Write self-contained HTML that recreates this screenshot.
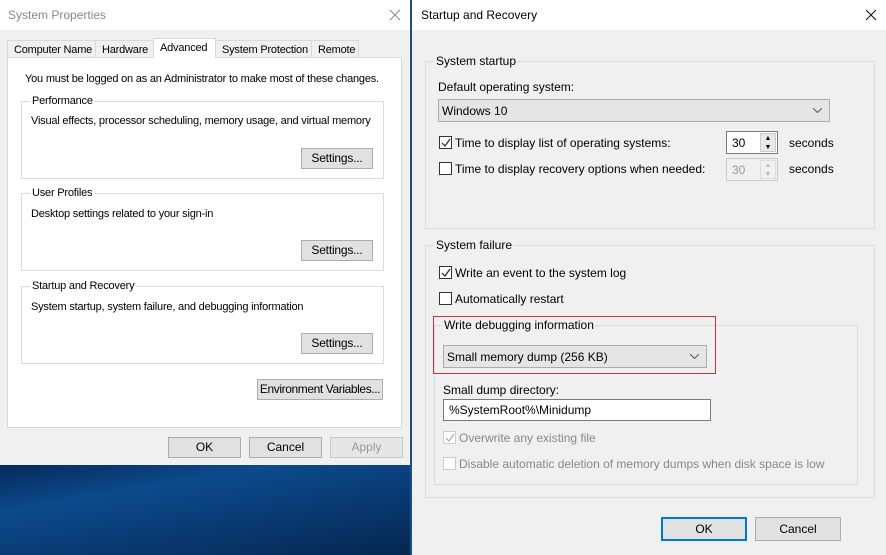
<!DOCTYPE html>
<html><head><meta charset="utf-8"><style>
*{box-sizing:border-box;margin:0;padding:0}
body{width:886px;height:555px;overflow:hidden;position:relative;font-family:"Liberation Sans",sans-serif;color:#000;background:#0a3a70}
.a{position:absolute;white-space:nowrap}
.L{font-size:11px;letter-spacing:-0.2px;line-height:14px}
.R{font-size:12px;line-height:14px}
.btn{position:absolute;background:#e1e1e1;border:1px solid #adadad;text-align:center;font-size:12px;white-space:nowrap}
.grp{position:absolute;border:1px solid #dcdcdc}
.lg{position:absolute;top:-8px;left:8px;padding:0 2px;line-height:14px}
.cb{position:absolute;width:13px;height:13px;border:1px solid #333;background:#fff}
.cb svg{position:absolute;left:0;top:0}
.chev{position:absolute;right:7px;top:8px}
</style></head><body>
<div class="a" style="left:0;top:465px;width:412px;height:90px;background:linear-gradient(170deg,#062a5a 0%,#0c4a8c 30%,#0a3d78 55%,#052650 100%)"></div>
<!-- Left window -->
<div class="a" style="left:0;top:0;width:410px;height:465px;background:#f0f0f0"></div>
<div class="a" style="left:0;top:0;width:410px;height:30px;background:#fff"></div>
<div class="a" style="left:8px;top:8px;font-size:12px;color:#888">System Properties</div>
<svg class="a" style="left:389px;top:9px" width="12" height="12"><path d="M1 1L11 11M11 1L1 11" stroke="#888" stroke-width="1"/></svg>
<div class="a" style="left:7px;top:57px;width:395px;height:371px;background:#fff;border:1px solid #d9d9d9"></div>
<div class="a L" style="left:7px;top:40px;width:89px;height:18px;border:1px solid #d9d9d9;background:#f0f0f0;padding:2px 6px">Computer Name</div>
<div class="a L" style="left:95px;top:40px;width:59px;height:18px;border:1px solid #d9d9d9;background:#f0f0f0;padding:2px 6px">Hardware</div>
<div class="a L" style="left:153px;top:38px;width:63px;height:20px;border:1px solid #d9d9d9;border-bottom:none;background:#fff;padding:2px 6px">Advanced</div>
<div class="a L" style="left:215px;top:40px;width:97px;height:18px;border:1px solid #d9d9d9;background:#f0f0f0;padding:2px 6px">System Protection</div>
<div class="a L" style="left:311px;top:40px;width:48px;height:18px;border:1px solid #d9d9d9;background:#f0f0f0;padding:2px 6px">Remote</div>
<div class="a L" style="left:25px;top:72px">You must be logged on as an Administrator to make most of these changes.</div>
<div class="grp L" style="left:21px;top:101px;width:363px;height:78px"><span class="lg" style="background:#fff">Performance</span></div>
<div class="a L" style="left:31px;top:114px">Visual effects, processor scheduling, memory usage, and virtual memory</div>
<div class="btn L" style="left:301px;top:148px;width:72px;height:21px;line-height:19px">Settings...</div>
<div class="grp L" style="left:21px;top:193px;width:363px;height:78px"><span class="lg" style="background:#fff">User Profiles</span></div>
<div class="a L" style="left:31px;top:207px">Desktop settings related to your sign-in</div>
<div class="btn L" style="left:301px;top:240px;width:72px;height:21px;line-height:19px">Settings...</div>
<div class="grp L" style="left:21px;top:286px;width:363px;height:78px"><span class="lg" style="background:#fff">Startup and Recovery</span></div>
<div class="a L" style="left:31px;top:300px">System startup, system failure, and debugging information</div>
<div class="btn L" style="left:301px;top:333px;width:72px;height:21px;line-height:19px">Settings...</div>
<div class="btn L" style="left:257px;top:379px;width:126px;height:21px;line-height:19px;letter-spacing:-0.4px">Environment Variables...</div>
<div class="btn" style="left:168px;top:437px;width:73px;height:21px;line-height:19px">OK</div>
<div class="btn" style="left:249px;top:437px;width:73px;height:21px;line-height:19px">Cancel</div>
<div class="btn" style="left:330px;top:437px;width:73px;height:21px;line-height:19px;color:#999;border-color:#c8c8c8;background:#e6e6e6">Apply</div>
<div class="a" style="left:410px;top:0;width:2px;height:555px;background:#1a4f86"></div>
<!-- Right window -->
<div class="a R" style="left:412px;top:0;width:474px;height:555px;background:#f0f0f0"></div>
<div class="a" style="left:412px;top:0;width:474px;height:30px;background:#fff"></div>
<div class="a R" style="left:421px;top:8px">Startup and Recovery</div>
<svg class="a" style="left:865px;top:9px" width="12" height="12"><path d="M1 1L11 11M11 1L1 11" stroke="#111" stroke-width="1"/></svg>
<div class="grp R" style="left:425px;top:61px;width:450px;height:168px"><span class="lg" style="background:#f0f0f0">System startup</span></div>
<div class="a R" style="left:438px;top:80px">Default operating system:</div>
<div class="a R" style="left:438px;top:99px;width:392px;height:23px;background:#e5e5e5;border:1px solid #adadad;padding:4px 3px">Windows 10<svg class="chev" width="9" height="5"><path d="M0 0L4.5 4.5L9 0" stroke="#555" fill="none"/></svg></div>
<div class="cb" style="left:439px;top:136px"><svg width="12" height="12"><path d="M2 6 L5 9 L10 2" stroke="#222" stroke-width="1.2" fill="none"/></svg></div>
<div class="a R" style="left:455px;top:136px">Time to display list of operating systems:</div>
<div class="a R" style="left:726px;top:131px;width:52px;height:23px;background:#fff;border:1px solid #7a7a7a;padding:4px 5px">30<span style="position:absolute;right:1px;top:1px;width:16px;height:19px;background:#e9e9e9;border:1px solid #ccc;font-size:7px;line-height:9px;text-align:center">▲<br>▼</span></div>
<div class="a R" style="left:789px;top:136px">seconds</div>
<div class="cb" style="left:439px;top:162px"></div>
<div class="a R" style="left:455px;top:162px">Time to display recovery options when needed:</div>
<div class="a R" style="left:726px;top:158px;width:52px;height:23px;background:#f0f0f0;border:1px solid #ccc;padding:4px 5px;color:#999">30<span style="position:absolute;right:1px;top:1px;width:16px;height:19px;background:#f0f0f0;border:1px solid #ddd;font-size:7px;line-height:9px;text-align:center;color:#bbb">▲<br>▼</span></div>
<div class="a R" style="left:789px;top:162px">seconds</div>
<div class="grp R" style="left:425px;top:245px;width:450px;height:253px"><span class="lg" style="background:#f0f0f0">System failure</span></div>
<div class="cb" style="left:439px;top:266px"><svg width="12" height="12"><path d="M2 6 L5 9 L10 2" stroke="#222" stroke-width="1.2" fill="none"/></svg></div>
<div class="a R" style="left:455px;top:266px">Write an event to the system log</div>
<div class="cb" style="left:439px;top:292px"></div>
<div class="a R" style="left:455px;top:292px">Automatically restart</div>
<div class="grp R" style="left:434px;top:325px;width:424px;height:160px"></div>
<div class="a" style="left:433px;top:316px;width:283px;height:58px;border:1px solid #d0303a"></div>
<div class="a R" style="left:443px;top:318px;background:#f0f0f0;padding:0 1px">Write debugging information</div>
<div class="a R" style="left:443px;top:345px;width:264px;height:23px;background:#e5e5e5;border:1px solid #adadad;padding:4px 3px">Small memory dump (256 KB)<svg class="chev" width="9" height="5"><path d="M0 0L4.5 4.5L9 0" stroke="#555" fill="none"/></svg></div>
<div class="a R" style="left:443px;top:383px">Small dump directory:</div>
<div class="a R" style="left:443px;top:399px;width:268px;height:22px;background:#fff;border:1px solid #7a7a7a;padding:3px 5px">%SystemRoot%\Minidump</div>
<div class="cb" style="left:443px;top:431px;border-color:#ccc"><svg width="12" height="12"><path d="M2 6 L5 9 L10 2" stroke="#aaa" stroke-width="1.2" fill="none"/></svg></div>
<div class="a R" style="left:459px;top:431px;color:#888">Overwrite any existing file</div>
<div class="cb" style="left:443px;top:457px;border-color:#ccc"></div>
<div class="a R" style="left:459px;top:457px;color:#888">Disable automatic deletion of memory dumps when disk space is low</div>
<div class="btn" style="left:661px;top:517px;width:86px;height:24px;line-height:20px;border:2px solid #0078d7">OK</div>
<div class="btn" style="left:755px;top:517px;width:86px;height:24px;line-height:22px">Cancel</div>
</body></html>
